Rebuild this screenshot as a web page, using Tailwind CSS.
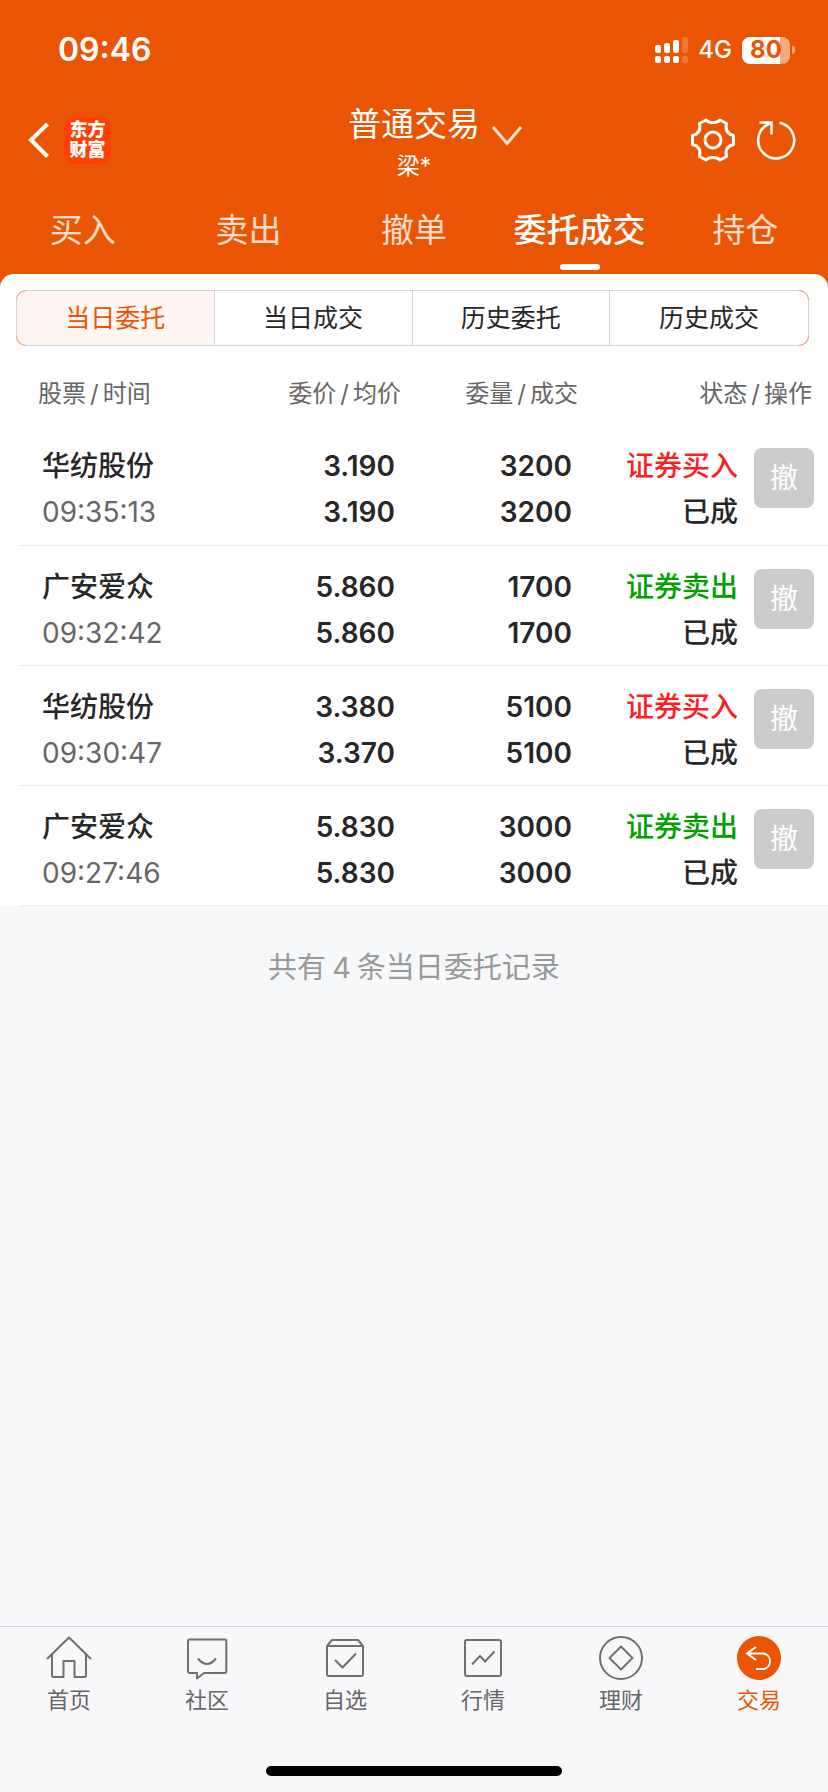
<!DOCTYPE html>
<html lang="zh-CN">
<head>
<meta charset="utf-8">
<meta name="viewport" content="width=device-width, initial-scale=1">
<title>普通交易</title>
<script src="https://cdn.jsdelivr.net/npm/@tailwindcss/browser@4"></script>
</head>
<body class="flex min-h-screen flex-col bg-[#f7f8fa] font-['Inter','Noto_Sans_CJK_SC',sans-serif] text-[#272727]">
<header class="bg-[#ea5504] text-white">
  <div class="flex h-[90px] items-center justify-between pt-[10px] pr-[33px] pl-[58px]">
    <time class="text-[32px] leading-10 font-semibold">09:46</time>
    <div class="flex items-center">
      <svg class="h-[26px] w-[33px]" viewBox="0 0 33 26" fill="#fff" role="img" aria-label="信号">
        <rect x="0" y="8" width="6" height="8" rx="2"/><rect x="9" y="6" width="6" height="10" rx="2"/><rect x="18" y="3" width="6" height="13" rx="2"/><rect x="27" y="0" width="6" height="16" rx="2" opacity=".2"/>
        <rect x="0" y="19" width="6" height="7" rx="2"/><rect x="9" y="19" width="6" height="7" rx="2"/><rect x="18" y="19" width="6" height="7" rx="2"/><rect x="27" y="19" width="6" height="7" rx="2" opacity=".2"/>
      </svg>
      <span class="ml-[10px] text-[24px] leading-8 font-medium">4G</span>
      <span class="ml-[10px] flex h-[27px] w-[48px] items-center justify-center rounded-lg bg-linear-to-r from-white from-80% to-white/50 to-80% text-[24px] leading-none font-bold text-[#ea5504]">80</span>
      <span class="ml-[2px] h-2 w-[3px] rounded-r-full bg-white/50"></span>
    </div>
  </div>
  <div class="grid h-[100px] grid-cols-3 items-center">
    <div class="flex items-center pl-[27px]">
      <button type="button" aria-label="返回" class="mr-[15px]">
        <svg class="h-[38px] w-[22px]" viewBox="0 0 22 38" fill="none" stroke="#fff" stroke-width="4"><path d="M20.500 3 4 19 20.500 35.500"/></svg>
      </button>
      <a href="#" class="flex size-[47px] flex-col items-center justify-center rounded-[10px] bg-[#ff4000] text-[18px] leading-5 font-black"><span>东方</span><span>财富</span></a>
    </div>
    <div class="flex flex-col items-center pt-1">
      <button type="button" class="relative text-[33px] leading-[48px]">普通交易<svg class="absolute top-[25px] left-full ml-[11px] h-[22px] w-[32px]" viewBox="0 0 32 22" fill="none" stroke="#ffe2d2" stroke-width="3"><path d="M2 2 16 18.500 30 2"/></svg></button>
      <span class="text-[23px] leading-9">梁*</span>
    </div>
    <div class="flex items-center justify-end gap-5 pr-[32px]">
      <button type="button" aria-label="设置">
        <svg class="size-[46px]" viewBox="-23 -23 46 46" fill="none" stroke="#fff" stroke-width="3" stroke-linejoin="round">
          <path d="M-7-20C-4-16.500 4-16.500 7-20L13.500-16.500C12-10 14.500-6 20.500-4.500V4.500C14.500 6 12 10 13.500 16.500L7 20C4 16.500-4 16.500-7 20L-13.500 16.500C-12 10-14.500 6-20.500 4.500V-4.500C-14.500-6-12-10-13.500-16.500Z"/><circle r="8"/></svg>
      </button>
      <button type="button" aria-label="刷新">
        <svg class="size-[40px]" viewBox="0 0 40 40" fill="none" stroke="#fff" stroke-width="2.600"><path d="M23.500 2.700A18 18 0 1 1 11 4.900L15.500 2.500M3.500 2.500H15.500V14.500"/></svg>
      </button>
    </div>
  </div>
  <nav class="grid grid-cols-5 pb-1 text-center text-[33px] leading-[44px] text-white/80">
    <a href="#" class="pt-[18px]">买入</a>
    <a href="#" class="pt-[18px]">卖出</a>
    <a href="#" class="pt-[18px]">撤单</a>
    <a href="#" aria-current="page" class="flex flex-col items-center pt-[18px] font-medium text-white">委托成交<span class="mt-3 h-1.5 w-10 rounded-[3px] bg-white"></span></a>
    <a href="#" class="pt-[18px]">持仓</a>
  </nav>
</header>
<main class="flex-1">
  <div class="bg-[#ea5504]">
    <section class="rounded-t-[14px] bg-white pt-4">
      <div class="relative mr-[19px] ml-4 grid h-14 grid-cols-4 rounded-[10px] border border-[#d3d5dc] text-[25px] leading-9">
        <button type="button" aria-pressed="true" class="rounded-l-[9px] border-r border-[#d3d5dc] bg-[#fff5f2] text-[#ea5504]">当日委托</button>
        <button type="button" class="border-r border-[#d3d5dc]">当日成交</button>
        <button type="button" class="border-r border-[#d3d5dc]">历史委托</button>
        <button type="button">历史成交</button>
        <span class="absolute -top-px -left-px size-[10px] rounded-tl-[10px] border-t border-l border-[#eda279]"></span>
        <span class="absolute -bottom-px -left-px size-[10px] rounded-bl-[10px] border-b border-l border-[#eda279]"></span>
        <span class="absolute -top-px -right-px size-[10px] rounded-tr-[10px] border-t border-r border-[#eda279]"></span>
        <span class="absolute -right-px -bottom-px size-[10px] rounded-br-[10px] border-r border-b border-[#eda279]"></span>
      </div>
      <div class="pl-5">
        <table class="w-full table-fixed text-right text-[28px] leading-[46px] font-semibold">
          <colgroup><col><col class="w-[178px]"><col class="w-[177px]"><col class="w-[162px]"><col class="w-[88px]"></colgroup>
          <thead class="h-[79px] text-[24px] leading-9 text-[#666]">
            <tr>
              <th class="pt-4 pl-[18px] text-left font-normal">股票<span class="mx-1">/</span>时间</th>
              <th class="pt-4 font-normal">委价<span class="mx-1">/</span>均价</th>
              <th class="pt-4 font-normal">委量<span class="mx-1">/</span>成交</th>
              <th colspan="2" class="pt-4 pr-4 font-normal">状态<span class="mx-1">/</span>操作</th>
            </tr>
          </thead>
          <tbody class="align-top">
            <tr class="h-[120px] border-b border-[#ececec]">
              <td class="pt-[18px] pl-[22px] text-left"><div class="font-medium">华纺股份</div><div class="font-normal text-[#666]">09:35:13</div></td>
              <td class="pt-[18px] pr-1.5"><div>3.190</div><div>3.190</div></td>
              <td class="pt-[18px] pr-1.5"><div>3200</div><div>3200</div></td>
              <td class="pt-[18px] pr-0.5 font-medium"><div class="text-[#fc1f1f]">证券买入</div><div>已成</div></td>
              <td class="pt-[23px] pr-3.5"><button type="button" class="ml-auto block size-[60px] rounded-lg bg-[#ccc] font-normal text-white">撤</button></td>
            </tr>
            <tr class="h-[120px] border-b border-[#ececec]">
              <td class="pt-[18px] pl-[22px] text-left"><div class="font-medium">广安爱众</div><div class="font-normal text-[#666]">09:32:42</div></td>
              <td class="pt-[18px] pr-1.5"><div>5.860</div><div>5.860</div></td>
              <td class="pt-[18px] pr-1.5"><div>1700</div><div>1700</div></td>
              <td class="pt-[18px] pr-0.5 font-medium"><div class="text-[#00a000]">证券卖出</div><div>已成</div></td>
              <td class="pt-[23px] pr-3.5"><button type="button" class="ml-auto block size-[60px] rounded-lg bg-[#ccc] font-normal text-white">撤</button></td>
            </tr>
            <tr class="h-[120px] border-b border-[#ececec]">
              <td class="pt-[18px] pl-[22px] text-left"><div class="font-medium">华纺股份</div><div class="font-normal text-[#666]">09:30:47</div></td>
              <td class="pt-[18px] pr-1.5"><div>3.380</div><div>3.370</div></td>
              <td class="pt-[18px] pr-1.5"><div>5100</div><div>5100</div></td>
              <td class="pt-[18px] pr-0.5 font-medium"><div class="text-[#fc1f1f]">证券买入</div><div>已成</div></td>
              <td class="pt-[23px] pr-3.5"><button type="button" class="ml-auto block size-[60px] rounded-lg bg-[#ccc] font-normal text-white">撤</button></td>
            </tr>
            <tr class="h-[120px] border-b border-[#ececec]">
              <td class="pt-[18px] pl-[22px] text-left"><div class="font-medium">广安爱众</div><div class="font-normal text-[#666]">09:27:46</div></td>
              <td class="pt-[18px] pr-1.5"><div>5.830</div><div>5.830</div></td>
              <td class="pt-[18px] pr-1.5"><div>3000</div><div>3000</div></td>
              <td class="pt-[18px] pr-0.5 font-medium"><div class="text-[#00a000]">证券卖出</div><div>已成</div></td>
              <td class="pt-[23px] pr-3.5"><button type="button" class="ml-auto block size-[60px] rounded-lg bg-[#ccc] font-normal text-white">撤</button></td>
            </tr>
          </tbody>
        </table>
      </div>
    </section>
  </div>
  <p class="pt-10 text-center text-[29px] leading-[44px] text-[#999]">共有<span class="mx-1.5">4</span>条当日委托记录</p>
</main>
<footer class="border-t border-[#d3d7de] bg-[#f8f8fa]">
  <nav class="grid grid-cols-6 text-[22px] leading-8 text-[#666]">
    <a href="#" class="flex flex-col items-center pt-2"><svg class="size-[46px]" viewBox="0 0 46 46" fill="none" stroke="#707070" stroke-width="2" stroke-linejoin="round"><path d="M1 24 23 2.500 45 24M6 19.500V40.500Q6 42 7.500 42H17.500V26H28.500V42H38.500Q40 42 40 40.500V19.500"/></svg><span class="mt-[3px]">首页</span></a>
    <a href="#" class="flex flex-col items-center pt-2"><svg class="size-[46px]" viewBox="0 0 46 46" fill="none" stroke="#707070" stroke-width="2" stroke-linejoin="round"><path d="M5.500 4.500H40.500Q42.300 4.500 42.300 6.300V36Q42.300 38 40.500 38H20L13 43.500V38H6Q4 38 4 36V6.300Q4 4.500 5.500 4.500Z"/><path d="M14 23.500Q23 34.500 32 23.500"/></svg><span class="mt-[3px]">社区</span></a>
    <a href="#" class="flex flex-col items-center pt-2"><svg class="size-[46px]" viewBox="0 0 46 46" fill="none" stroke="#707070" stroke-width="2" stroke-linejoin="round"><path d="M5 11H41V39Q41 41 39 41H7Q5 41 5 39ZM5 11 10 5H36L41 11"/><path d="M13 25 20.500 32.500 34 18.500"/></svg><span class="mt-[3px]">自选</span></a>
    <a href="#" class="flex flex-col items-center pt-2"><svg class="size-[46px]" viewBox="0 0 46 46" fill="none" stroke="#707070" stroke-width="2"><rect x="5" y="5" width="36" height="36" rx="2"/><path d="M12 29.500 20 21 25 26.500 34.500 16.500"/></svg><span class="mt-[3px]">行情</span></a>
    <a href="#" class="flex flex-col items-center pt-2"><svg class="size-[46px]" viewBox="0 0 46 46" fill="none" stroke="#707070" stroke-width="2" stroke-linejoin="round"><circle cx="23" cy="23" r="21"/><path d="M23 11.500 34.500 23 23 34.500 11.500 23Z"/></svg><span class="mt-[3px]">理财</span></a>
    <a href="#" aria-current="page" class="flex flex-col items-center pt-2 text-[#ea5504]"><svg class="size-[46px]" viewBox="0 0 46 46" fill="none" stroke="#fff" stroke-width="2"><circle cx="23" cy="23" r="22" fill="#ea5504" stroke="none"/><path d="M20 12 11 18.500 20 25M11 18.500H28A8 8 0 0 1 28 34H20"/></svg><span class="mt-[3px]">交易</span></a>
  </nav>
  <div class="mx-auto mt-[50px] mb-4 h-2.5 w-[296px] rounded-full bg-black"></div>
</footer>
</body>
</html>
